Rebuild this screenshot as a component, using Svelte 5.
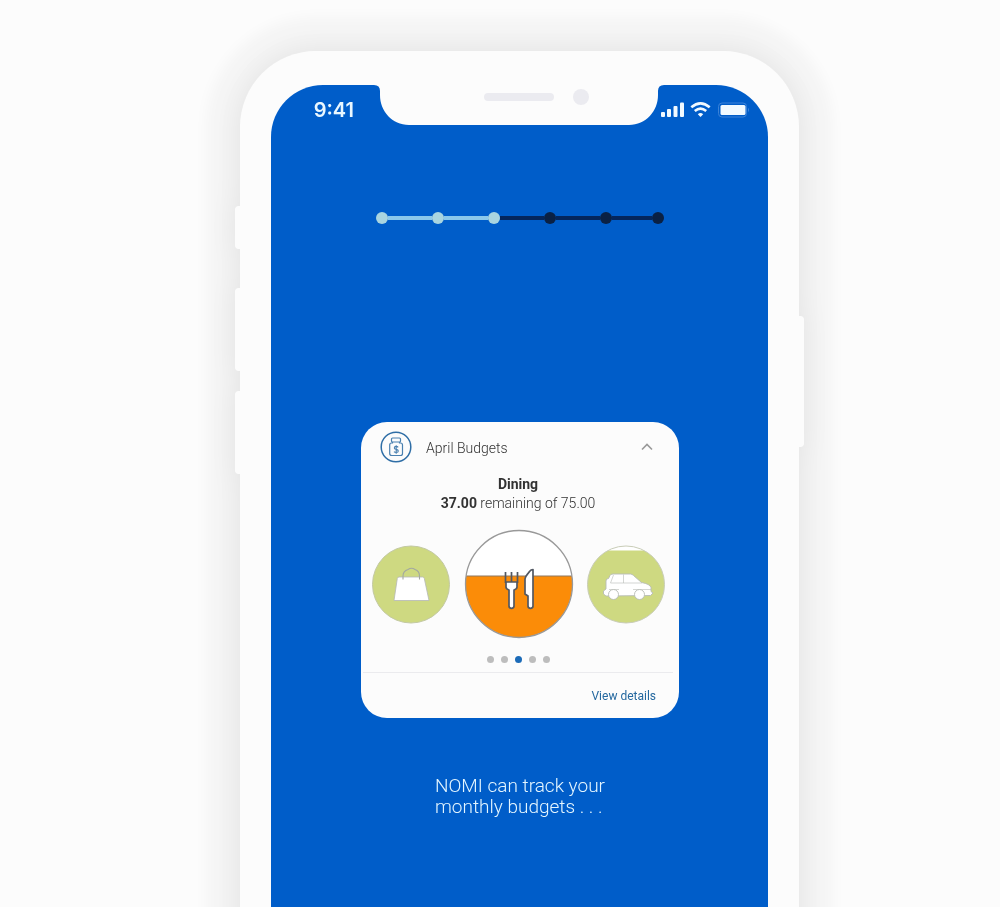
<script>
  const steps = [true, true, true, false, false, false];
  const pages = [0, 1, 2, 3, 4];
  let current = $state(2);
  let open = $state(true);
</script>

<main class="page">
  <div class="phone">
    <span class="key mute"></span>
    <span class="key up"></span>
    <span class="key down"></span>
    <span class="key power"></span>

    <div class="screen">
      <header class="status">
        <time class="clock">9:41</time>
        <svg class="notch" viewBox="0 0 290 40" aria-hidden="true">
          <path d="M0 0Q6 0 6 6V10C6 26 18 40 35 40H255C272 40 284 26 284 10V6Q284 0 290 0Z" fill="#fcfcfc" />
          <rect x="110" y="8" width="70" height="8" rx="4" fill="#ebebf0" />
          <circle cx="207" cy="12" r="8" fill="#ebebf0" />
        </svg>
        <svg class="signals" viewBox="0 0 90 18" aria-hidden="true">
          <g fill="#f2faff">
            <rect x="1" y="11" width="4" height="5" rx="1" />
            <rect x="7" y="8" width="4" height="8" rx="1" />
            <rect x="13.500" y="5" width="4" height="11" rx="1" />
            <rect x="20" y="1.500" width="4" height="14.500" rx="1" />
            <path d="M37.800 13.200Q40.500 11 43.200 13.200L40.500 16Z" />
            <rect x="60.500" y="4" width="25" height="10" rx="1.500" />
          </g>
          <g fill="none" stroke="#f2faff" stroke-width="2.600">
            <path d="M31.300 6.200Q40.500 -1.600 49.700 6.200" />
            <path d="M34.800 10Q40.500 5.300 46.200 10" />
          </g>
          <rect x="58.500" y="2" width="28" height="14" rx="3.500" fill="none" stroke="#3a82d8" />
          <path d="M88 6.800Q90.200 9 88 11.200Z" fill="#3a82d8" />
        </svg>
      </header>

      <div class="content">
        <ol class="progress" aria-label="Progress">
          {#each steps as done}
            <li class:done></li>
          {/each}
        </ol>

        <section class="card">
          <div class="head">
            <svg class="badge" viewBox="0 0 32 32" aria-hidden="true">
              <g fill="none" stroke="#4a80b0" stroke-width="1.200">
                <circle cx="16" cy="16" r="14.800" stroke="#2f6ea6" stroke-width="1.500" />
                <rect x="11.500" y="7" width="9" height="4" rx="1" />
                <path d="M12.500 11V12H11.500Q9.700 12 9.700 14V22.500Q9.700 24.500 11.700 24.500H20.500Q22.500 24.500 22.500 22.500V14Q22.500 12 20.500 12H19.500V11" />
                <path d="M18.200 16.300Q17.500 15.400 16.200 15.400Q14.300 15.400 14.300 16.900Q14.300 18 16.200 18.400Q18.300 18.800 18.300 20.100Q18.300 21.500 16.200 21.500Q14.700 21.500 14 20.600M16.200 14.200V22.700" stroke-width="1.100" />
              </g>
            </svg>
            <h1>April Budgets</h1>
            <button class="toggle" aria-label="Collapse" aria-expanded={open} onclick={() => (open = !open)}>
              <svg viewBox="0 0 12 8"><path d="M1 6.500L6 1.500L11 6.500" fill="none" stroke="#999" stroke-width="1.600" /></svg>
            </button>
          </div>

          <p class="summary"><strong>Dining</strong><br /><strong>37.00</strong> remaining of 75.00</p>

          <div class="budgets">
            <svg class="small" viewBox="0 0 80 80" role="img" aria-label="Shopping">
              <circle cx="40" cy="40.500" r="38.500" fill="#ced981" stroke="#c3c9a3" />
              <path d="M28 33H51.500Q53 33 53.300 34.500L58 56.500H23L26.300 34.500Q26.600 33 28 33Z" fill="#fff" stroke="#b5b8b8" stroke-width=".8" />
              <path d="M32 35.500V32Q32 27 37 25.500Q40.500 23 44 25.500Q48.500 27 48.500 32V35.500" fill="none" stroke="#a3a8a0" stroke-width="1.100" />
            </svg>
            <svg class="large" viewBox="0 0 110 110" role="img" aria-label="Dining">
              <circle cx="55" cy="55" r="53.500" fill="#fff" />
              <path d="M2.100 47A53.500 53.500 0 1 0 107.900 47Z" fill="#fb8c08" />
              <path d="M2.100 47H107.900" stroke="#8d7760" />
              <circle cx="55" cy="55" r="53.500" fill="none" stroke="#999" stroke-width="1.300" />
              <g stroke="#525862" stroke-width="1.700" stroke-linejoin="round">
                <path d="M41.500 43V54M47.500 43V54M53.500 43V54" fill="none" />
                <path d="M42 53H53V58Q53 60 50 61V77Q50 79.300 47.500 79.300T45 77V61Q42 60 42 58Z" fill="#fff" />
                <path d="M69 40.500V77Q69 79.300 66.500 79.300T64 77V67L61 65V50C61 47 64 45 65.500 42.500Q67 40.500 69 40.500Z" fill="#fff" />
              </g>
            </svg>
            <svg class="small" viewBox="0 0 80 80" role="img" aria-label="Auto">
              <circle cx="40" cy="40.500" r="38.500" fill="#fff" />
              <path d="M22 6.500A38.500 38.500 0 1 0 58 6.500Z" fill="#ced981" />
              <circle cx="40" cy="40.500" r="38.500" fill="none" stroke="#c9cdb8" />
              <g fill="#fff" stroke="#b7bbb5" stroke-width=".9" stroke-linejoin="round">
                <path d="M20 52L17.500 50V47L20 45V37Q20 34.500 22.500 34.500L24 31.500Q24.500 30 27 30H44.500Q46 30 47.500 31.500L55.500 38.500Q64 40 65 43.500V47.500L67 49L64.500 51.500Z" />
                <path d="M24.500 39H56M37.500 30.500V39M27.500 31L24.500 39M23 45.500H33M47 45.500H65" fill="none" stroke-width=".6" />
                <circle cx="27.500" cy="50.500" r="5" />
                <circle cx="53.500" cy="50.500" r="5" />
              </g>
            </svg>
          </div>

          <div class="dots">
            {#each pages as i}
              <button class:active={i === current} aria-label={`Budget ${i + 1}`} onclick={() => (current = i)}></button>
            {/each}
          </div>

          <footer><a href="#details">View details</a></footer>
        </section>

        <p class="caption">NOMI can track your<br />monthly budgets . . .</p>
      </div>
    </div>
  </div>
</main>

<style>
  :global(body) {
    background: #fcfcfc;
  }
  .page {
    box-sizing: border-box;
    height: 100vh;
    overflow: hidden;
    padding: 51px 0 0 38px;
    display: flex;
    justify-content: center;
    font-family: Roboto, "Liberation Sans", sans-serif;
    background: #fcfcfc;
  }
  .phone {
    box-sizing: border-box;
    position: relative;
    flex: 0 1 559px;
    height: 120vh;
    padding: 34px 31px 0;
    border-radius: 76px 76px 0 0;
    background: #fcfcfc;
    box-shadow: 0 0 14px 34px rgba(0, 0, 0, 0.03);
    filter: drop-shadow(0 0 14px rgba(0, 0, 0, 0.08));
  }
  .key {
    position: absolute;
    left: -5px;
    width: 6px;
    border-radius: 4px 0 0 4px;
    background: #fcfcfc;
  }
  .mute {
    top: 155px;
    height: 43px;
  }
  .up {
    top: 237px;
    height: 83px;
  }
  .down {
    top: 340px;
    height: 83px;
  }
  .power {
    top: 265px;
    left: auto;
    right: -5px;
    height: 131px;
    border-radius: 0 4px 4px 0;
  }
  .screen {
    height: 100%;
    border-radius: 52px 52px 0 0;
    background: #005dc9;
  }
  .status {
    display: grid;
    grid-template-columns: 1fr 290px 1fr;
    align-items: start;
  }
  .clock {
    justify-self: end;
    padding: 13px 20px 0 0;
    color: #e9f7ff;
    font: 600 20px/25px Inter, sans-serif;
  }
  .notch {
    width: 290px;
    height: 40px;
  }
  .signals {
    width: 90px;
    height: 18px;
    margin: 16px 0 0 -4px;
  }
  .content {
    padding: 87px 0 0 2px;
    display: flex;
    flex-direction: column;
    align-items: center;
  }
  .progress {
    list-style: none;
    margin: 0;
    padding: 0;
    display: grid;
    grid-template-columns: repeat(4, 56px) 52px 12px;
  }
  .progress li {
    --tone: #0a2144;
    --rail: #04265c;
    height: 12px;
    display: flex;
    align-items: center;
  }
  .progress li.done {
    --tone: #a9d5e0;
    --rail: #8bc8eb;
  }
  .progress li:nth-child(3) {
    --rail: #04265c;
  }
  .progress li::before {
    content: "";
    flex: none;
    width: 12px;
    height: 12px;
    border-radius: 50%;
    background: var(--tone);
  }
  .progress li::after {
    content: "";
    flex: 1;
    height: 4px;
    background: var(--rail);
  }
  .card {
    box-sizing: border-box;
    width: 318px;
    margin-top: 198px;
    padding-top: 9px;
    border-radius: 26px;
    background: #fcfcfc;
    color: #333;
  }
  .head {
    display: flex;
    align-items: center;
    padding: 0 24px 0 19px;
  }
  .badge {
    width: 32px;
    height: 32px;
  }
  h1 {
    flex: 1;
    margin: 2px 0 0 14px;
    font-size: 14px;
    font-weight: 300;
    line-height: 20px;
  }
  button {
    border: 0;
    padding: 0;
    background: none;
    cursor: pointer;
  }
  .toggle {
    width: 16px;
    height: 16px;
    display: grid;
    place-items: center;
  }
  .toggle svg {
    width: 12px;
    height: 8px;
  }
  .summary {
    margin: 12px 4px 0 0;
    text-align: center;
    font-size: 14px;
    font-weight: 300;
    line-height: 19px;
  }
  strong {
    color: #333;
    font-weight: 700;
  }
  .budgets {
    margin-top: 16px;
    padding: 0 13px 0 10px;
    display: flex;
    justify-content: space-between;
    align-items: center;
  }
  .small {
    width: 80px;
    height: 80px;
  }
  .large {
    width: 110px;
    height: 110px;
  }
  .dots {
    display: flex;
    justify-content: center;
    gap: 7px;
    margin: 17px 4px 0 0;
  }
  .dots button {
    width: 7px;
    height: 7px;
    border-radius: 50%;
    background: #bdbdbd;
  }
  .dots .active {
    background: #1c6bb8;
  }
  footer {
    margin: 9px 6px 0 2px;
    padding: 14px 17px 13px;
    border-top: 1px solid #ebebee;
    text-align: right;
    font-size: 12px;
    line-height: 18px;
  }
  a {
    color: #24689f;
    text-decoration: none;
  }
  .caption {
    margin: 57px 0 0;
    color: #e4f6ff;
    font-size: 19px;
    font-weight: 300;
    line-height: 21px;
  }
</style>
